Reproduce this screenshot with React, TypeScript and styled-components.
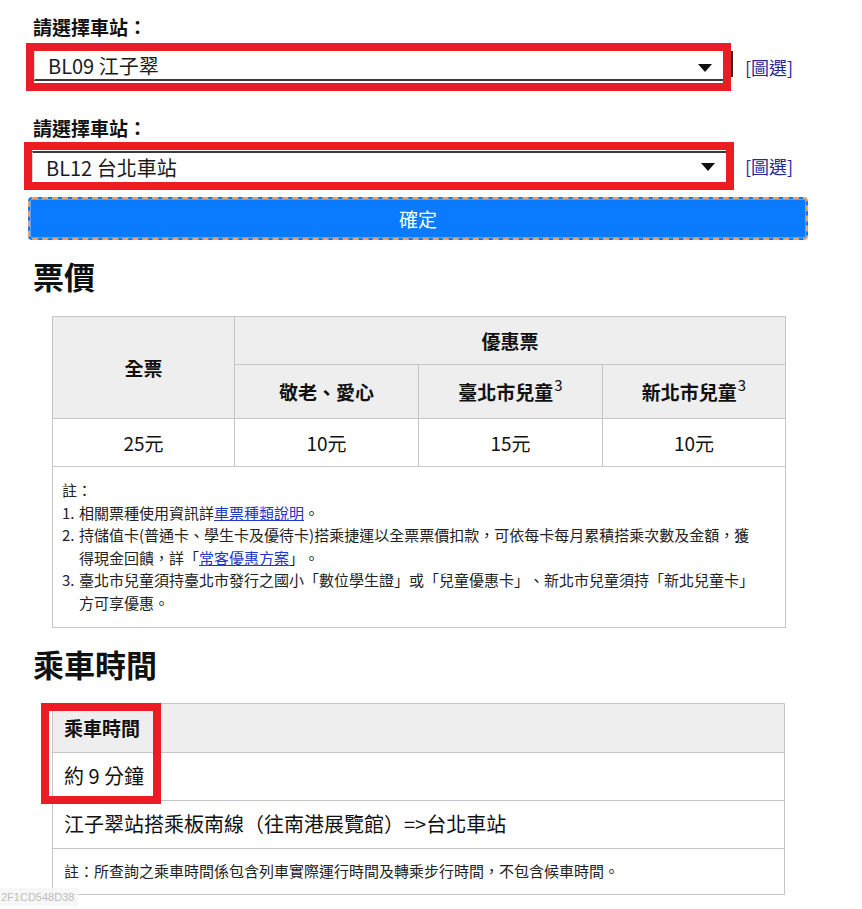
import React from 'react';
import styled, { createGlobalStyle } from 'styled-components';

const GlobalStyle = createGlobalStyle`
  html, body {
    margin: 0;
    padding: 0;
    background: #ffffff;
  }
  body {
    font-family: "Noto Sans CJK TC", "Noto Sans", sans-serif;
    color: #111111;
    text-spacing-trim: space-all;
  }
`;

const Page = styled.div`
  position: relative;
  width: 862px;
  min-height: 909px;
  padding: 15px 26px 0;
  box-sizing: border-box;
  display: flex;
  flex-direction: column;
`;

const Field = styled.div<{ $first?: boolean }>`
  display: flex;
  flex-direction: column;
  margin-top: ${({ $first }) => ($first ? '0' : '25px')};
`;

const Label = styled.div<{ $gap: number }>`
  padding-left: 7px;
  font-size: 19px;
  font-weight: 700;
  line-height: 24px;
  margin-bottom: ${({ $gap }) => $gap}px;
`;

const SelectRow = styled.div`
  display: flex;
  align-items: center;
`;

const Frame = styled.div<{ $wide?: boolean }>`
  position: relative;
  width: ${({ $wide }) => ($wide ? '710px' : '705px')};
  margin-left: ${({ $wide }) => ($wide ? '-2px' : '0')};
  height: 48px;
  box-sizing: border-box;
  border: 8px solid #ec1c24;
  background: #ffffff;

  &::after {
    content: '';
    display: ${({ $wide }) => ($wide ? 'none' : 'block')};
    position: absolute;
    right: -10px;
    top: 0;
    width: 2px;
    height: 26px;
    background: #2a2a2a;
  }
`;

const Select = styled.select<{ $edge: 'top' | 'bottom' }>`
  appearance: none;
  width: 100%;
  height: 30px;
  margin-top: ${({ $edge }) => ($edge === 'top' ? '1px' : '0')};
  box-sizing: border-box;
  border: none;
  border-left: 1px solid #d6d6d6;
  ${({ $edge }) => ($edge === 'top' ? 'border-top: 2px solid #3a3a3a;' : 'border-bottom: 2px solid #3a3a3a;')}
  border-radius: 0;
  background: #ffffff;
  padding: 0 40px 0 13px;
  font-family: "Noto Sans CJK TC", "Noto Sans", sans-serif;
  font-size: 20px;
  color: #1a1a1a;
  outline: none;
`;

const Arrow = styled.svg`
  position: absolute;
  right: 11px;
  top: 13px;
  pointer-events: none;
`;

const MapLink = styled.a<{ $gap: number }>`
  margin-left: ${({ $gap }) => $gap}px;
  font-size: 18px;
  color: #23289a;
  text-decoration: none;
  line-height: 24px;
`;

const Submit = styled.button`
  margin: 7px 0 0 2px;
  width: 780px;
  height: 43px;
  box-sizing: border-box;
  border: 2px dashed #e8a265;
  border-radius: 4px;
  background: #0a7bff;
  box-shadow: inset 0 0 0 1px #5aa6ff;
  color: #ffffff;
  font-family: "Noto Sans CJK TC", "Noto Sans", sans-serif;
  font-size: 19px;
  cursor: pointer;
`;

const Heading = styled.h2<{ $top: number }>`
  margin: ${({ $top }) => $top}px 0 0 7px;
  font-size: 31px;
  font-weight: 700;
  line-height: 40px;
`;

const TableWrap = styled.div<{ $top: number }>`
  position: relative;
  margin: ${({ $top }) => $top}px 0 0 26px;
  width: 733px;
`;

const Table = styled.table`
  width: 733px;
  table-layout: fixed;
  border-collapse: collapse;
`;

const Th = styled.th<{ $h?: number }>`
  height: ${({ $h }) => ($h ? `${$h}px` : 'auto')};
  padding: 0;
  border: 1px solid #c6c6c6;
  background: #eeeeee;
  font-size: 19px;
  font-weight: 700;
  line-height: 24px;
  text-align: center;
  vertical-align: middle;
`;

const Sup = styled.sup`
  font-size: 15px;
  font-weight: 400;
  line-height: 0;
  position: relative;
  top: -1px;
  margin-left: 1px;
`;

const Td = styled.td<{ $h?: number }>`
  height: ${({ $h }) => ($h ? `${$h}px` : 'auto')};
  padding: 0;
  border: 1px solid #c6c6c6;
  font-size: 19px;
  line-height: 24px;
  text-align: center;
  vertical-align: middle;
`;

const NoteCell = styled.td`
  padding: 12px 25px 12px 9px;
  border: 1px solid #c6c6c6;
  font-size: 15px;
  line-height: 22.6px;
  color: #222222;
`;

const NoteList = styled.ol`
  margin: 0;
  padding: 0;
  list-style: none;
`;

const NoteItem = styled.li`
  display: grid;
  grid-template-columns: 17px 1fr;
`;

const NoteLink = styled.a`
  color: #2236c8;
  text-decoration: underline;
`;

const InfoHead = styled.th`
  height: 48px;
  padding: 0 11px;
  border: 1px solid #c6c6c6;
  background: #eeeeee;
  font-size: 19px;
  font-weight: 700;
  line-height: 24px;
  text-align: left;
`;

const InfoCell = styled.td<{ $h: number; $small?: boolean }>`
  height: ${({ $h }) => $h}px;
  padding: 0 11px;
  border: 1px solid #c6c6c6;
  font-size: ${({ $small }) => ($small ? '15px' : '20px')};
  line-height: 24px;
  color: ${({ $small }) => ($small ? '#222222' : '#111111')};
  text-align: left;
`;

const Highlight = styled.div`
  position: absolute;
  left: -11px;
  top: 0;
  width: 120px;
  height: 101px;
  box-sizing: border-box;
  border: 8px solid #ec1c24;
  pointer-events: none;
`;

const Watermark = styled.div`
  position: absolute;
  left: 0;
  top: 888px;
  padding: 1px 4px 1px 1px;
  background: rgba(246, 246, 246, 0.85);
  font-family: "Liberation Sans", Arial, sans-serif;
  font-size: 11px;
  line-height: 16px;
  color: #bdbdbd;
`;

const DownArrow = () => (
  <Arrow width="14" height="8" viewBox="0 0 14 8">
    <path d="M0 0 H14 L7 8 Z" fill="#111" />
  </Arrow>
);

const stations = [
  { label: 'BL09 江子翠', edge: 'bottom' as const, wide: false, gap: 4, linkGap: 14 },
  { label: 'BL12 台北車站', edge: 'top' as const, wide: true, gap: 2, linkGap: 11 },
];

export default function App() {
  return (
    <>
      <GlobalStyle />
      <Page>
        {stations.map((s, i) => (
          <Field key={s.label} $first={i === 0}>
            <Label $gap={s.gap}>請選擇車站：</Label>
            <SelectRow>
              <Frame $wide={s.wide}>
                <Select $edge={s.edge} defaultValue={s.label}>
                  <option>{s.label}</option>
                </Select>
                <DownArrow />
              </Frame>
              <MapLink href="#" $gap={s.linkGap}>[圖選]</MapLink>
            </SelectRow>
          </Field>
        ))}

        <Submit type="button">確定</Submit>

        <Heading $top={16}>票價</Heading>
        <TableWrap $top={20}>
          <Table>
            <colgroup>
              <col style={{ width: 182 }} />
              <col style={{ width: 184 }} />
              <col style={{ width: 184 }} />
              <col style={{ width: 183 }} />
            </colgroup>
            <tbody>
              <tr>
                <Th rowSpan={2}>全票</Th>
                <Th colSpan={3} $h={47}>優惠票</Th>
              </tr>
              <tr>
                <Th $h={53}>敬老、愛心</Th>
                <Th>臺北市兒童<Sup>3</Sup></Th>
                <Th>新北市兒童<Sup>3</Sup></Th>
              </tr>
              <tr>
                <Td $h={47}>25元</Td>
                <Td>10元</Td>
                <Td>15元</Td>
                <Td>10元</Td>
              </tr>
              <tr>
                <NoteCell colSpan={4}>
                  <div>註：</div>
                  <NoteList>
                    <NoteItem>
                      <span>1.</span>
                      <span>相關票種使用資訊詳<NoteLink href="#">車票種類說明</NoteLink>。</span>
                    </NoteItem>
                    <NoteItem>
                      <span>2.</span>
                      <span>
                        持儲值卡(普通卡、學生卡及優待卡)搭乘捷運以全票票價扣款，可依每卡每月累積搭乘次數及金額，獲得現金回饋，詳「
                        <NoteLink href="#">常客優惠方案</NoteLink>」。
                      </span>
                    </NoteItem>
                    <NoteItem>
                      <span>3.</span>
                      <span>
                        臺北市兒童須持臺北市發行之國小「數位學生證」或「兒童優惠卡」、新北市兒童須持「新北兒童卡」方可享優惠。
                      </span>
                    </NoteItem>
                  </NoteList>
                </NoteCell>
              </tr>
            </tbody>
          </Table>
        </TableWrap>

        <Heading $top={16}>乘車時間</Heading>
        <TableWrap $top={19}>
          <Table>
            <tbody>
              <tr>
                <InfoHead>乘車時間</InfoHead>
              </tr>
              <tr>
                <InfoCell $h={47}>約 9 分鐘</InfoCell>
              </tr>
              <tr>
                <InfoCell $h={47}>江子翠站搭乘板南線（往南港展覽館）=&gt;台北車站</InfoCell>
              </tr>
              <tr>
                <InfoCell $h={45} $small>註：所查詢之乘車時間係包含列車實際運行時間及轉乘步行時間，不包含候車時間。</InfoCell>
              </tr>
            </tbody>
          </Table>
          <Highlight />
        </TableWrap>

        <Watermark>2F1CD548D38</Watermark>
      </Page>
    </>
  );
}
